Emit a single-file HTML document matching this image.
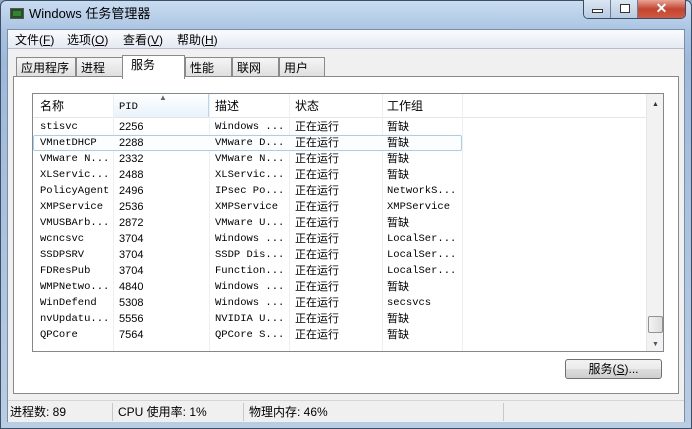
<!DOCTYPE html>
<html><head><meta charset="utf-8"><style>
*{margin:0;padding:0;box-sizing:border-box}
body{width:692px;height:429px;overflow:hidden;background:#8fa9c6;font-family:"Liberation Sans","Noto Sans CJK SC",sans-serif;font-size:12px;line-height:14px;color:#000;position:relative}
span{line-height:14px}
.frame{position:absolute;left:0;top:0;width:692px;height:429px;background:linear-gradient(#c9dcf0,#a9c4e2 30px,#9db9da 60px,#b9cde3);border:1px solid #3d4f66;border-radius:6px 6px 0 0}
.title{position:absolute;left:29px;top:6px;font-size:13px;line-height:16px;color:#000}
.ico{position:absolute;left:10px;top:8px;width:14px;height:11px;background:#2d4a2d;border:1px solid #555}
.ico:after{content:"";position:absolute;left:2px;top:2px;width:8px;height:5px;background:#2b8a2b}
.btns{position:absolute;left:583px;top:0;width:103px;height:19px;border:1px solid #3a4d66;border-top:none;border-radius:0 0 5px 5px;overflow:hidden;display:flex}
.b1,.b2{width:27px;background:linear-gradient(#dbe6f3,#b9cbe1);border-right:1px solid #6b7f99;position:relative}
.b3{flex:1;background:linear-gradient(#e8a597,#c4452f 50%,#d0593f)}
.inner{position:absolute;left:7px;top:29px;width:678px;height:393px;background:#f0f0f0;border:1px solid #7a8ea8}
.menu{position:absolute;left:0;top:0;width:676px;height:19px;background:linear-gradient(#fafbfd,#e4eaf3);border-bottom:1px solid #b6bccc}
.menu span{position:absolute;top:3px}
.tab{position:absolute;top:27px;height:20px;background:linear-gradient(#f5f5f5,#dedede);border:1px solid #8a8a8a;border-bottom:none;padding:3px 0 0 4px}
.tab.sel{top:25px;height:24px;background:#fff;z-index:2;padding:2px 0 0 8px}
.panel{position:absolute;left:5px;top:46px;width:666px;height:318px;background:#fff;border:1px solid #8a8a8a}
.list{position:absolute;left:18px;top:16px;width:632px;height:259px;border:1px solid #828790;background:#fff;overflow:hidden}
.hdr{position:absolute;left:0;top:0;height:24px;width:614px;border-bottom:1px solid #e5e5e5}
.hdr span{position:absolute;top:5px}
.hdr span.m{top:6px}
.sep{position:absolute;top:0;height:259px;border-left:1px solid #eceff3}
.row{position:absolute;left:0;height:16px;width:614px}
.row span{position:absolute;top:1px;font-size:11px;line-height:14px}
.row span.m{top:1px}
.m{font-family:"Liberation Mono",monospace;font-size:10.5px!important}
.sb{position:absolute;left:613px;top:0;width:17px;height:257px;background:#f2f2f2;border-left:1px solid #e6e6e6}
.thumb{position:absolute;left:1px;top:222px;width:15px;height:17px;background:linear-gradient(90deg,#f3f3f3,#dcdcdc);border:1px solid #929292;border-radius:2px}
.btn{position:absolute;left:551px;top:282px;width:97px;height:20px;border:1px solid #707070;border-radius:3px;background:linear-gradient(#f2f2f2,#ebebeb 50%,#dddddd 50%,#cfcfcf);text-align:center;padding-top:2px}
.status{position:absolute;left:0;top:370px;width:676px;height:22px;background:#f0f0f0;border-top:1px solid #d5d5d5}
.status span{position:absolute;top:4px}
.ss{position:absolute;top:2px;height:18px;border-left:1px solid #c8c8c8}
</style></head><body>
<div class="frame"></div>
<div class="ico"></div>
<div class="title">Windows 任务管理器</div>
<div class="btns"><div class="b1"><div style="position:absolute;left:8px;top:9px;width:11px;height:4px;border:1px solid #333;background:#fff"></div></div><div class="b2"><div style="position:absolute;left:9px;top:4px;width:10px;height:9px;border:1px solid #333;background:#fff"></div></div><div class="b3"><div style="color:#fff;font-weight:bold;font-size:14px;text-align:center;line-height:17px">✕</div></div></div>
<div class="inner">
<div class="menu"><span style="left:7px">文件(<u>F</u>)</span><span style="left:59px">选项(<u>O</u>)</span><span style="left:115px">查看(<u>V</u>)</span><span style="left:169px">帮助(<u>H</u>)</span></div>
<div class="tab" style="left:8px;width:60px">应用程序</div>
<div class="tab" style="left:68px;width:47px">进程</div>
<div class="tab sel" style="left:114px;width:63px">服务</div>
<div class="tab" style="left:177px;width:47px">性能</div>
<div class="tab" style="left:224px;width:47px">联网</div>
<div class="tab" style="left:271px;width:46px">用户</div>
<div class="panel">
<div class="list">
<div style="position:absolute;left:80px;top:0;width:96px;height:23px;background:linear-gradient(#fff,#e8f3fb);border-left:1px solid #b8d7ef;border-right:1px solid #b8d7ef"></div>
<div class="hdr"><span style="left:7px">名称</span><span style="left:86px" class="m">PID</span><span style="left:126px;top:-3px;font-size:8px;color:#666">▲</span><span style="left:182px">描述</span><span style="left:262px">状态</span><span style="left:354px">工作组</span></div>
<div class="sep" style="left:80px"></div><div class="sep" style="left:176px"></div><div class="sep" style="left:256px"></div><div class="sep" style="left:349px"></div><div class="sep" style="left:429px"></div>
<div class="row" style="top:25px"><span class="m" style="left:7px">stisvc</span><span style="left:86px">2256</span><span class="m" style="left:182px">Windows ...</span><span style="left:262px">正在运行</span><span style="left:354px">暂缺</span></div>
<div class="row" style="top:41px;border:1px solid #aacfee;width:429px;border-radius:2px;background:#fbfdff"><span class="m" style="left:6px;top:0">VMnetDHCP</span><span style="left:85px;top:0">2288</span><span class="m" style="left:181px;top:0">VMware D...</span><span style="left:261px;top:0">正在运行</span><span style="left:353px;top:0">暂缺</span></div>
<div class="row" style="top:57px"><span class="m" style="left:7px">VMware N...</span><span style="left:86px">2332</span><span class="m" style="left:182px">VMware N...</span><span style="left:262px">正在运行</span><span style="left:354px">暂缺</span></div>
<div class="row" style="top:73px"><span class="m" style="left:7px">XLServic...</span><span style="left:86px">2488</span><span class="m" style="left:182px">XLServic...</span><span style="left:262px">正在运行</span><span style="left:354px">暂缺</span></div>
<div class="row" style="top:89px"><span class="m" style="left:7px">PolicyAgent</span><span style="left:86px">2496</span><span class="m" style="left:182px">IPsec Po...</span><span style="left:262px">正在运行</span><span class="m" style="left:354px">NetworkS...</span></div>
<div class="row" style="top:105px"><span class="m" style="left:7px">XMPService</span><span style="left:86px">2536</span><span class="m" style="left:182px">XMPService</span><span style="left:262px">正在运行</span><span class="m" style="left:354px">XMPService</span></div>
<div class="row" style="top:121px"><span class="m" style="left:7px">VMUSBArb...</span><span style="left:86px">2872</span><span class="m" style="left:182px">VMware U...</span><span style="left:262px">正在运行</span><span style="left:354px">暂缺</span></div>
<div class="row" style="top:137px"><span class="m" style="left:7px">wcncsvc</span><span style="left:86px">3704</span><span class="m" style="left:182px">Windows ...</span><span style="left:262px">正在运行</span><span class="m" style="left:354px">LocalSer...</span></div>
<div class="row" style="top:153px"><span class="m" style="left:7px">SSDPSRV</span><span style="left:86px">3704</span><span class="m" style="left:182px">SSDP Dis...</span><span style="left:262px">正在运行</span><span class="m" style="left:354px">LocalSer...</span></div>
<div class="row" style="top:169px"><span class="m" style="left:7px">FDResPub</span><span style="left:86px">3704</span><span class="m" style="left:182px">Function...</span><span style="left:262px">正在运行</span><span class="m" style="left:354px">LocalSer...</span></div>
<div class="row" style="top:185px"><span class="m" style="left:7px">WMPNetwo...</span><span style="left:86px">4840</span><span class="m" style="left:182px">Windows ...</span><span style="left:262px">正在运行</span><span style="left:354px">暂缺</span></div>
<div class="row" style="top:201px"><span class="m" style="left:7px">WinDefend</span><span style="left:86px">5308</span><span class="m" style="left:182px">Windows ...</span><span style="left:262px">正在运行</span><span class="m" style="left:354px">secsvcs</span></div>
<div class="row" style="top:217px"><span class="m" style="left:7px">nvUpdatu...</span><span style="left:86px">5556</span><span class="m" style="left:182px">NVIDIA U...</span><span style="left:262px">正在运行</span><span style="left:354px">暂缺</span></div>
<div class="row" style="top:233px"><span class="m" style="left:7px">QPCore</span><span style="left:86px">7564</span><span class="m" style="left:182px">QPCore S...</span><span style="left:262px">正在运行</span><span style="left:354px">暂缺</span></div>
<div class="sb"><div style="position:absolute;left:5px;top:4px;font-size:7px;color:#333">▲</div><div class="thumb"></div><div style="position:absolute;left:5px;top:244px;font-size:7px;color:#555">▼</div></div>
</div>
<div class="btn">服务(<u>S</u>)...</div>
</div>
<div class="status"><span style="left:2px">进程数: 89</span><div class="ss" style="left:104px"></div><span style="left:110px">CPU 使用率: 1%</span><div class="ss" style="left:235px"></div><span style="left:241px">物理内存: 46%</span><div class="ss" style="left:495px"></div></div>
</div>
</body></html>
